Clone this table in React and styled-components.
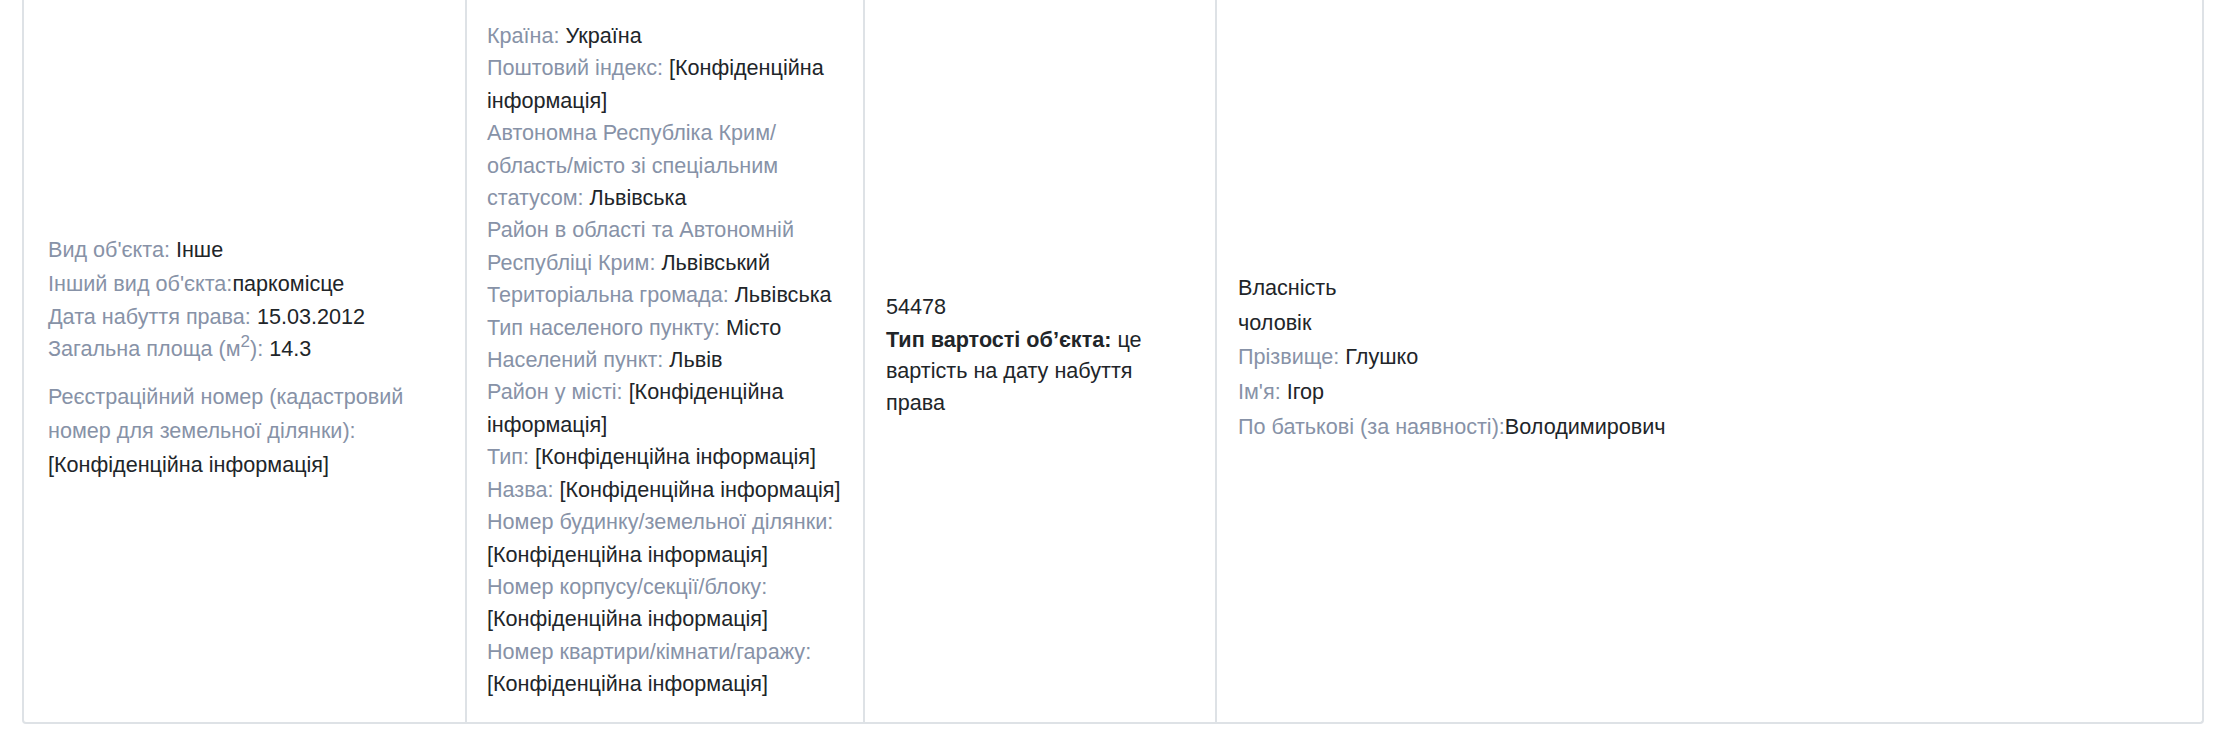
import styled, { createGlobalStyle } from 'styled-components';

const GlobalStyle = createGlobalStyle`
  body {
    margin: 0;
    background: #ffffff;
    font-family: "Liberation Sans", Arial, sans-serif;
    font-size: 21.6px;
    color: #212529;
  }
`;

const Card = styled.div`
  display: flex;
  box-sizing: border-box;
  width: 2182px;
  margin-left: 22px;
  border: 2px solid #dee2e6;
  border-top: none;
  border-radius: 0 0 4px 4px;
  background: #fff;
`;

// cells are centred vertically; the address cell sets the row height
const Cell = styled.div`
  box-sizing: border-box;
  width: ${p => p.$width}px;
  flex: none;
  display: flex;
  flex-direction: column;
  justify-content: center;
  padding: 20px ${p => p.$padX || 21}px ${p => p.$padBottom || 26}px ${p => p.$padLeft || p.$padX || 21}px;
  border-right: ${p => (p.$last ? 'none' : '2px solid #dee2e6')};
  line-height: ${p => p.$lineHeight || 32.4}px;
`;

const Item = styled.div`
  margin-top: ${p => p.$gap || 0}px;
  line-height: ${p => (p.$lineHeight ? `${p.$lineHeight}px` : 'inherit')};
`;

const Label = styled.span`
  color: #8792a7;
`;

const Value = styled.span`
  color: #212529;
  font-weight: ${p => (p.$bold ? 700 : 400)};
`;

const Sup = styled.sup`
  font-size: 17px;
  line-height: 0;
  vertical-align: 9px;
`;

const HIDDEN = '[Конфіденційна інформація]';

const addressRows = [
  ['Країна: ', 'Україна'],
  ['Поштовий індекс: ', HIDDEN],
  ['Автономна Республіка Крим/область/місто зі спеціальним статусом: ', 'Львівська'],
  ['Район в області та Автономній Республіці Крим: ', 'Львівський'],
  ['Територіальна громада: ', 'Львівська'],
  ['Тип населеного пункту: ', 'Місто'],
  ['Населений пункт: ', 'Львів'],
  ['Район у місті: ', HIDDEN],
  ['Тип: ', HIDDEN],
  ['Назва: ', HIDDEN],
  ['Номер будинку/земельної ділянки: ', HIDDEN],
  ['Номер корпусу/секції/блоку: ', HIDDEN],
  ['Номер квартири/кімнати/гаражу: ', HIDDEN],
];

export default function App() {
  return (
    <>
      <GlobalStyle />
      <Card>
        <Cell $width={443} $padLeft={24}>
          <Item>
            <Label>Вид об'єкта: </Label>
            <Value>Інше</Value>
          </Item>
          <Item $gap={2}>
            <Label>Інший вид об'єкта:</Label>
            <Value>паркомісце</Value>
          </Item>
          <Item>
            <Label>Дата набуття права: </Label>
            <Value>15.03.2012</Value>
          </Item>
          <Item>
            <Label>
              Загальна площа (м<Sup>2</Sup>):{' '}
            </Label>
            <Value>14.3</Value>
          </Item>
          <Item $gap={14} $lineHeight={34}>
            <Label>Реєстраційний номер (кадастровий номер для земельної ділянки): </Label>
            <Value>{HIDDEN}</Value>
          </Item>
        </Cell>

        <Cell $width={398} $padX={20} $padBottom={21}>
          {addressRows.map(([label, value]) => (
            <Item key={label}>
              <Label>{label}</Label>
              <Value>{value}</Value>
            </Item>
          ))}
        </Cell>

        <Cell $width={352} $padBottom={34}>
          <Item $lineHeight={35}>
            <Value>54478</Value>
          </Item>
          <Item $lineHeight={31.7}>
            <Value $bold>Тип вартості об’єкта:</Value> <Value>це вартість на дату набуття права</Value>
          </Item>
        </Cell>

        <Cell $width={984} $last $lineHeight={34.6}>
          <Item>
            <Value>Власність</Value>
          </Item>
          <Item>
            <Value>чоловік</Value>
          </Item>
          <Item>
            <Label>Прізвище: </Label>
            <Value>Глушко</Value>
          </Item>
          <Item>
            <Label>Ім'я: </Label>
            <Value>Ігор</Value>
          </Item>
          <Item>
            <Label>По батькові (за наявності):</Label>
            <Value>Володимирович</Value>
          </Item>
        </Cell>
      </Card>
    </>
  );
}
